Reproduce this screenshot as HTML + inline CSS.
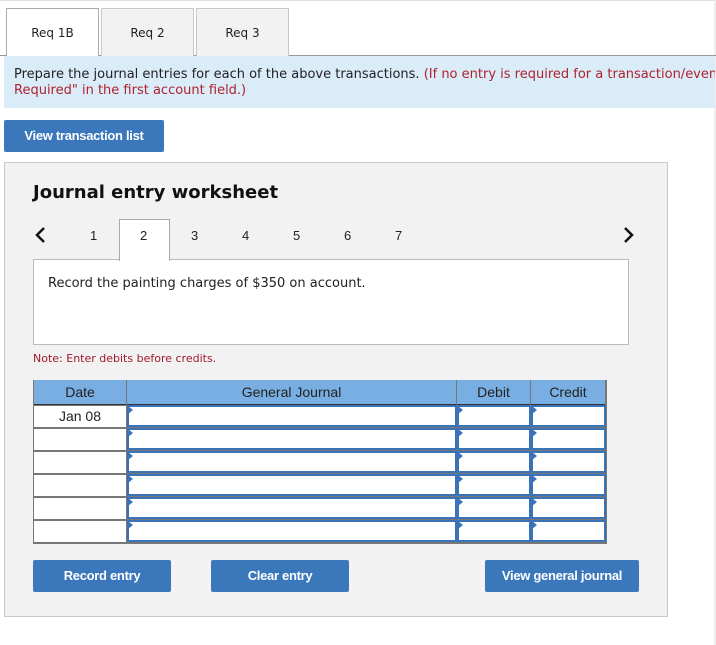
<!DOCTYPE html>
<html><head><meta charset="utf-8"><style>
*{box-sizing:border-box;margin:0;padding:0}
body{width:716px;height:645px;background:#fff;position:relative;overflow:hidden;font-family:"DejaVu Sans",Verdana,sans-serif;color:#222}
.a{position:absolute}
.tab{position:absolute;top:8px;height:48px;border:1px solid #c8c8c8;border-bottom:none;background:#f2f2f2;font-size:12px;text-align:center;line-height:48px}
.btn{position:absolute;background:#3a77bb;color:#fff;font-family:"Liberation Sans",Arial,sans-serif;font-weight:bold;font-size:13px;text-align:center;border-radius:2px;letter-spacing:-0.3px}
.num{position:absolute;top:228px;font-family:"Liberation Sans",Arial,sans-serif;font-size:13px;color:#222}
.hd{position:absolute;top:380px;height:25px;background:#79aee3;font-family:"Liberation Sans",Arial,sans-serif;font-size:14px;text-align:center;line-height:24px;color:#222;border-bottom:1px solid #333}
.dc{position:absolute;background:#fff;left:34px;width:92px;height:21px}
.in{position:absolute;background:#fff;border:2px solid #3b73b9;height:22px}
.in:before{content:"";position:absolute;left:-1px;top:-1px;border-left:5px solid #3b73b9;border-top:4px solid transparent;border-bottom:4px solid transparent}
</style></head><body>
<div class="a" style="left:0;top:0;width:716px;height:1px;background:#ddd"></div>
<div class="a" style="left:714px;top:0;width:2px;height:645px;background:#eee"></div>
<div class="a" style="left:0;top:55px;width:716px;height:1px;background:#999"></div>
<div class="tab" style="left:6px;width:93px;background:#fff;height:49px;border-color:#aaa">Req 1B</div>
<div class="tab" style="left:101px;width:93px">Req 2</div>
<div class="tab" style="left:196px;width:93px">Req 3</div>
<div class="a" style="left:4px;top:56px;width:711px;height:52px;background:#dbecf9;font-size:13px;line-height:16px;padding:11px 0 0 10px;white-space:nowrap;overflow:hidden">Prepare the journal entries for each of the above transactions. <span style="color:#b0212f">(If no entry is required for a transaction/event, select "No Journal Entry<br>Required" in the first account field.)</span></div>
<div class="btn" style="left:4px;top:120px;width:160px;height:32px;line-height:31px">View transaction list</div>
<div class="a" style="left:4px;top:162px;width:664px;height:455px;background:#f2f2f2;border:1px solid #c8c8c8"></div>
<div class="a" style="left:33px;top:182px;font-size:18px;font-weight:bold;color:#111">Journal entry worksheet</div>
<svg class="a" style="left:34px;top:226px" width="14" height="18"><path d="M10 2 L3 9 L10 16" stroke="#111" stroke-width="2.5" fill="none"/></svg>
<svg class="a" style="left:622px;top:226px" width="14" height="18"><path d="M3 2 L10 9 L3 16" stroke="#111" stroke-width="2.5" fill="none"/></svg>
<div class="a" style="left:119px;top:219px;width:51px;height:42px;background:#fff;border:1px solid #aaa;border-bottom:none;z-index:2"></div>
<div class="num" style="left:90px">1</div>
<div class="num" style="left:140px;z-index:3">2</div>
<div class="num" style="left:191px">3</div>
<div class="num" style="left:242px">4</div>
<div class="num" style="left:293px">5</div>
<div class="num" style="left:344px">6</div>
<div class="num" style="left:395px">7</div>
<div class="a" style="left:33px;top:259px;width:596px;height:86px;background:#fff;border:1px solid #bbb;font-size:13px;padding:16px 0 0 14px">Record the painting charges of $350 on account.</div>
<div class="a" style="left:33px;top:352px;font-size:11px;color:#a0192b">Note: Enter debits before credits.</div>
<div class="a" style="left:33px;top:380px;width:574px;height:164px;background:#777"></div>
<div class="hd" style="left:34px;width:92px">Date</div>
<div class="hd" style="left:127px;width:329px">General Journal</div>
<div class="hd" style="left:457px;width:73px">Debit</div>
<div class="hd" style="left:531px;width:74px">Credit</div>
<div class="dc" style="top:406px;font-family:'Liberation Sans',Arial,sans-serif;font-size:14px;text-align:center;line-height:20px">Jan 08</div>
<div class="dc" style="top:429px"></div><div class="dc" style="top:452px"></div><div class="dc" style="top:475px"></div><div class="dc" style="top:498px"></div><div class="dc" style="top:521px"></div>
<div class="in" style="left:127px;width:330px;top:405px"></div><div class="in" style="left:457px;width:74px;top:405px"></div><div class="in" style="left:531px;width:75px;top:405px"></div>
<div class="in" style="left:127px;width:330px;top:428px"></div><div class="in" style="left:457px;width:74px;top:428px"></div><div class="in" style="left:531px;width:75px;top:428px"></div>
<div class="in" style="left:127px;width:330px;top:451px"></div><div class="in" style="left:457px;width:74px;top:451px"></div><div class="in" style="left:531px;width:75px;top:451px"></div>
<div class="in" style="left:127px;width:330px;top:474px"></div><div class="in" style="left:457px;width:74px;top:474px"></div><div class="in" style="left:531px;width:75px;top:474px"></div>
<div class="in" style="left:127px;width:330px;top:497px"></div><div class="in" style="left:457px;width:74px;top:497px"></div><div class="in" style="left:531px;width:75px;top:497px"></div>
<div class="in" style="left:127px;width:330px;top:520px"></div><div class="in" style="left:457px;width:74px;top:520px"></div><div class="in" style="left:531px;width:75px;top:520px"></div>
<div class="btn" style="left:33px;top:560px;width:138px;height:32px;line-height:31px">Record entry</div>
<div class="btn" style="left:211px;top:560px;width:138px;height:32px;line-height:31px">Clear entry</div>
<div class="btn" style="left:485px;top:560px;width:154px;height:32px;line-height:31px">View general journal</div>
</body></html>
